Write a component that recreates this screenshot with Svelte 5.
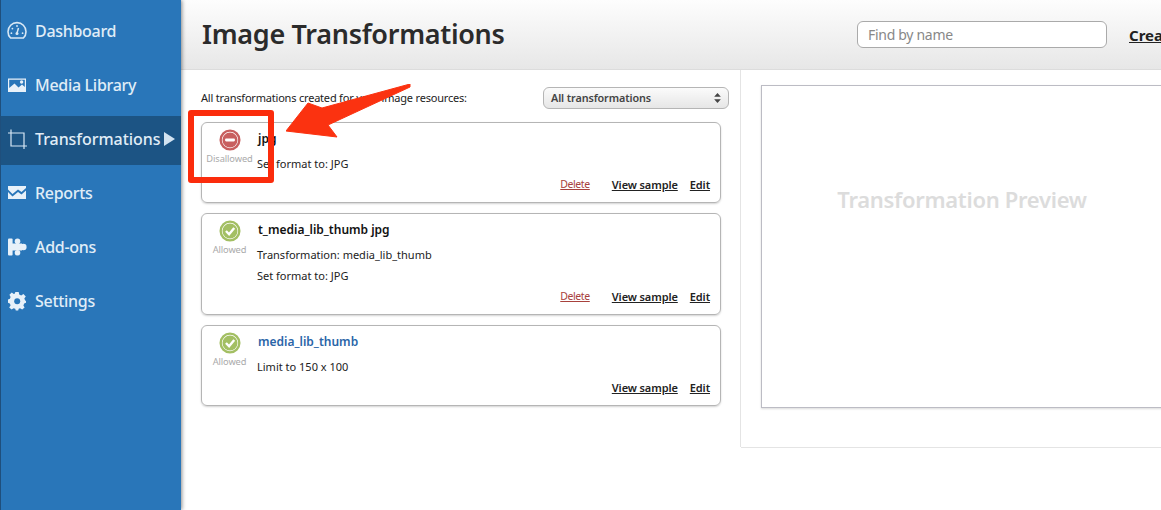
<script>
  const nav = [
    { label: 'Dashboard', icon: 'dash' },
    { label: 'Media Library', icon: 'media' },
    { label: 'Transformations', icon: 'crop', active: true },
    { label: 'Reports', icon: 'reports' },
    { label: 'Add-ons', icon: 'addons' },
    { label: 'Settings', icon: 'settings' },
  ];

  const cards = [
    { name: 'jpg', status: 'Disallowed', lines: ['Set format to: JPG'], del: true, cls: 'short' },
    { name: 't_media_lib_thumb jpg', status: 'Allowed', lines: ['Transformation: media_lib_thumb', 'Set format to: JPG'], del: true, cls: 'tall' },
    { name: 'media_lib_thumb', status: 'Allowed', lines: ['Limit to 150 x 100'], del: false, cls: 'short', link: true },
  ];
</script>

<div class="page">
  <aside class="sidebar">
    {#each nav as item}
      <div class="nav-item" class:active={item.active}>
        <svg class="nav-icon" viewBox="0 0 20 20" width="20" height="20">
          {#if item.icon === 'dash'}
            <path d="M3.6 17 A9 9 0 1 1 16.4 17 Z" fill="none" stroke="#d8e8f5" stroke-width="1.6" stroke-linejoin="round" />
            <path d="M10 12 L11.5 7" stroke="#d8e8f5" stroke-width="1.5" />
            <circle cx="10" cy="12.6" r="1.5" fill="#d8e8f5" />
            <circle cx="10" cy="5" r="0.9" fill="#d8e8f5" />
            <circle cx="5.4" cy="7.6" r="0.9" fill="#d8e8f5" />
            <circle cx="4.4" cy="12.2" r="0.9" fill="#d8e8f5" />
            <circle cx="15.6" cy="12.2" r="0.9" fill="#d8e8f5" />
          {:else if item.icon === 'media'}
            <path d="M1 3.5 H19 V17 H1 Z" fill="#e8f1f9" />
            <path d="M2.2 4.7 H17.8 V12 L15 9.5 L11.5 12.5 L7.5 8.5 L2.2 13 Z" fill="#2976b9" />
            <circle cx="14.6" cy="7" r="1.7" fill="#e8f1f9" />
          {:else if item.icon === 'crop'}
            <path d="M4 0.5 V17 H20 M1 4 H17 V20" fill="none" stroke="#d8e8f5" stroke-width="1.2" />
          {:else if item.icon === 'reports'}
            <path d="M1 3 H19 V5 L14.5 9 L11 6.5 L5.5 11 L1 6.5 Z" fill="#e8f1f9" />
            <path d="M1 9 L5.5 13.5 L11 9 L14.5 11.5 L19 7.5 V16 H1 Z" fill="#e8f1f9" />
          {:else if item.icon === 'addons'}
            <g fill="#e8f1f9">
              <rect x="1" y="1.5" width="4.6" height="17" rx="1" />
              <rect x="5" y="6.5" width="10" height="7" />
              <circle cx="10.5" cy="4.2" r="2.8" />
              <circle cx="10.5" cy="15.8" r="2.8" />
              <circle cx="16.4" cy="10" r="3.2" />
            </g>
          {:else}
            <path d="M8.3 1 H11.7 L12.2 3.6 L14.2 4.5 L16.4 3 L18.8 5.4 L17.3 7.6 L18.2 9.6 L19 10 V11.8 L17.2 12.4 L16.4 14.4 L17.6 16.6 L15.2 18.6 L13 17.2 L11.7 17.8 L11.2 19.4 H8.8 L8.2 17.8 L6.6 17.2 L4.6 18.6 L2.2 16.4 L3.6 14.2 L2.8 12.4 L1 11.8 V8.4 L2.9 7.8 L3.6 6 L2.4 3.8 L4.8 1.6 L6.8 3 L7.9 2.6 Z" fill="#e8f1f9" />
            <circle cx="10.2" cy="10.2" r="3" fill="#2976b9" />
          {/if}
        </svg>
        <span>{item.label}</span>
        {#if item.active}<span class="caret"></span>{/if}
      </div>
    {/each}
  </aside>

  <main class="main">
    <header class="topbar">
      <h1>Image Transformations</h1>
      <input class="search" placeholder="Find by name" />
      <a class="create">Create new transformation</a>
    </header>

    <div class="content">
      <section class="list">
        <div class="list-head">
          <span class="list-title">All transformations created for your image resources:</span>
          <div class="select">All transformations
            <svg viewBox="0 0 8 12" width="7" height="10"><path d="M4 0 L8 4.5 H0 Z M4 12 L8 7.5 H0 Z" fill="#444" /></svg>
          </div>
        </div>
        {#each cards as card}
          <div class="card {card.cls}">
            <div class="status">
              <svg viewBox="0 0 24 24" width="22" height="22">
                {#if card.status === 'Allowed'}
                  <circle cx="12" cy="12" r="10.2" fill="#fff" stroke="#a3bf63" stroke-width="2.6" />
                  <circle cx="12" cy="12" r="8.2" fill="#a3bf63" />
                  <path d="M7.6 12 L11 15.6 L16.6 8.6" fill="none" stroke="#fff" stroke-width="2.6" />
                {:else}
                  <circle cx="12" cy="12" r="10.2" fill="#fff" stroke="#c85f5f" stroke-width="2.6" />
                  <circle cx="12" cy="12" r="8.2" fill="#c85f5f" />
                  <rect x="6.6" y="10.4" width="10.8" height="3.2" rx="1.2" fill="#fff" />
                {/if}
              </svg>
              <span class="status-label">{card.status}</span>
            </div>
            <div class="body">
              <div class="name" class:link={card.link}>{card.name}</div>
              {#each card.lines as line}
                <div class="line">{line}</div>
              {/each}
            </div>
            <div class="actions">
              {#if card.del}<a class="delete">Delete</a>{/if}
              <a>View sample</a>
              <a>Edit</a>
            </div>
          </div>
        {/each}
      </section>

      <section class="preview">
        <div class="preview-box">Transformation Preview</div>
      </section>
    </div>
  </main>

  <div class="callout"></div>
  <svg class="arrow" viewBox="0 0 130 55" width="130" height="55">
    <path d="M124 0 L124 3 L42 41 L51 53 L0 47 L22 19 L36 24 Z" fill="#fb3210" stroke="#fb3210" stroke-width="1" stroke-linejoin="round" />
  </svg>
</div>

<style>
  :global(body) {
    margin: 0;
    background: #fff;
    overflow: hidden;
  }

  .page {
    position: relative;
    display: flex;
    width: 1161px;
    height: 510px;
    overflow: hidden;
    font-family: "Noto Sans", "Open Sans", sans-serif;
    color: #222;
  }

  .sidebar {
    flex: 0 0 181px;
    box-sizing: border-box;
    padding-top: 4px;
    background: #2976b9;
    border-left: 1px solid #1f4f7c;
    box-shadow: 1px 0 4px rgba(0, 0, 0, 0.45);
    z-index: 1;
  }

  .nav-item {
    display: flex;
    align-items: center;
    height: 54px;
    padding-left: 6px;
    font-size: 16px;
    font-weight: 500;
    letter-spacing: -0.3px;
    color: #e0edf7;
  }

  .nav-item.active {
    box-sizing: border-box;
    background: #1c5484;
    height: 49px;
    margin: 4px 0 1px;
    padding-bottom: 3px;
    letter-spacing: -0.05px;
  }

  .nav-icon {
    flex: none;
    margin-right: 8px;
  }

  .caret {
    margin-left: 4px;
    border-left: 11px solid #d2e3f1;
    border-top: 7px solid transparent;
    border-bottom: 7px solid transparent;
  }

  .main {
    flex: 1;
    min-width: 0;
  }

  .topbar {
    display: flex;
    align-items: center;
    box-sizing: border-box;
    height: 70px;
    padding-left: 21px;
    white-space: nowrap;
    background: linear-gradient(#fdfdfd, #e7e7e7);
    border-bottom: 1px solid #dcdcdc;
  }

  h1 {
    flex: 0 0 655px;
    margin: 0 0 2px;
    font-size: 27px;
    font-weight: 600;
    letter-spacing: -0.3px;
    color: #2b2b2b;
  }

  .search {
    flex: none;
    box-sizing: border-box;
    width: 250px;
    height: 27px;
    padding: 0 10px;
    border: 1px solid #aaa;
    border-radius: 6px;
    background: #fff;
    font: 14px "Noto Sans", sans-serif;
    letter-spacing: -0.3px;
  }

  .search::placeholder {
    color: #888;
  }

  .create {
    margin-left: 22px;
    font-size: 15px;
    font-weight: 700;
    text-decoration: underline;
    color: #222;
  }

  .content {
    display: flex;
  }

  .list {
    box-sizing: border-box;
    width: 560px;
    height: 377px;
    padding: 17px 20px 0 20px;
    border-right: 1px solid #e4e4e4;
  }

  .list-head {
    display: flex;
    align-items: center;
    justify-content: space-between;
    height: 22px;
    margin-right: -9px;
    margin-bottom: 13px;
    font-size: 11px;
    letter-spacing: -0.2px;
  }

  .list-title {
    padding-bottom: 2px;
  }

  .select {
    display: flex;
    align-items: center;
    justify-content: space-between;
    box-sizing: border-box;
    width: 186px;
    height: 22px;
    padding: 0 7px 1px;
    border: 1px solid #b5b5b5;
    border-radius: 6px;
    background: linear-gradient(#fbfbfb, #e6e6e6);
    font-size: 10.8px;
    font-weight: 600;
    letter-spacing: -0.1px;
    color: #444;
  }

  .card {
    position: relative;
    box-sizing: border-box;
    display: flex;
    width: 520px;
    margin-bottom: 10px;
    border: 1px solid #b5b5b5;
    border-radius: 6px;
    box-shadow: 0 1px 2px rgba(0, 0, 0, 0.18);
  }

  .card.short {
    height: 81px;
  }

  .card.tall {
    height: 102px;
  }

  .status {
    flex: 0 0 55px;
    display: flex;
    flex-direction: column;
    align-items: center;
    padding-top: 6px;
  }

  .status-label {
    margin-top: 1px;
    font-size: 9.3px;
    letter-spacing: -0.1px;
    color: #aaa;
  }

  .body {
    padding-top: 7px;
    font-size: 11px;
  }

  .name {
    height: 26px;
    padding-left: 1px;
    font-size: 12px;
    font-weight: 600;
    color: #111;
  }

  .name.link {
    color: #2a65a8;
  }

  .line {
    height: 21px;
  }

  .actions {
    position: absolute;
    right: 10px;
    bottom: 10px;
    display: flex;
    gap: 12px;
    font-size: 11px;
    font-weight: 600;
    letter-spacing: -0.1px;
  }

  .actions a {
    text-decoration: underline;
    color: #222;
  }

  .actions .delete {
    margin-right: 10px;
    font-size: 10.5px;
    font-weight: 400;
    letter-spacing: -0.4px;
    color: #a8413c;
  }

  .preview {
    box-sizing: border-box;
    flex: 1;
    height: 378px;
    padding: 15px 0 0 20px;
    border-bottom: 1px solid #e4e4e4;
    overflow: hidden;
  }

  .preview-box {
    box-sizing: border-box;
    display: flex;
    align-items: center;
    justify-content: center;
    width: 420px;
    height: 323px;
    padding: 0 18px 96px 0;
    border: 1px solid #bcbcc4;
    box-shadow: 0 1px 2px rgba(0, 0, 0, 0.15);
    font-size: 22px;
    font-weight: 600;
    letter-spacing: -0.3px;
    color: #dcdcdc;
  }

  .callout {
    position: absolute;
    left: 188px;
    top: 110px;
    box-sizing: border-box;
    width: 86px;
    height: 73px;
    border: 6px solid #fb2c0c;
    border-radius: 3px;
    z-index: 2;
  }

  .arrow {
    position: absolute;
    left: 286px;
    top: 84px;
    z-index: 2;
  }
</style>
